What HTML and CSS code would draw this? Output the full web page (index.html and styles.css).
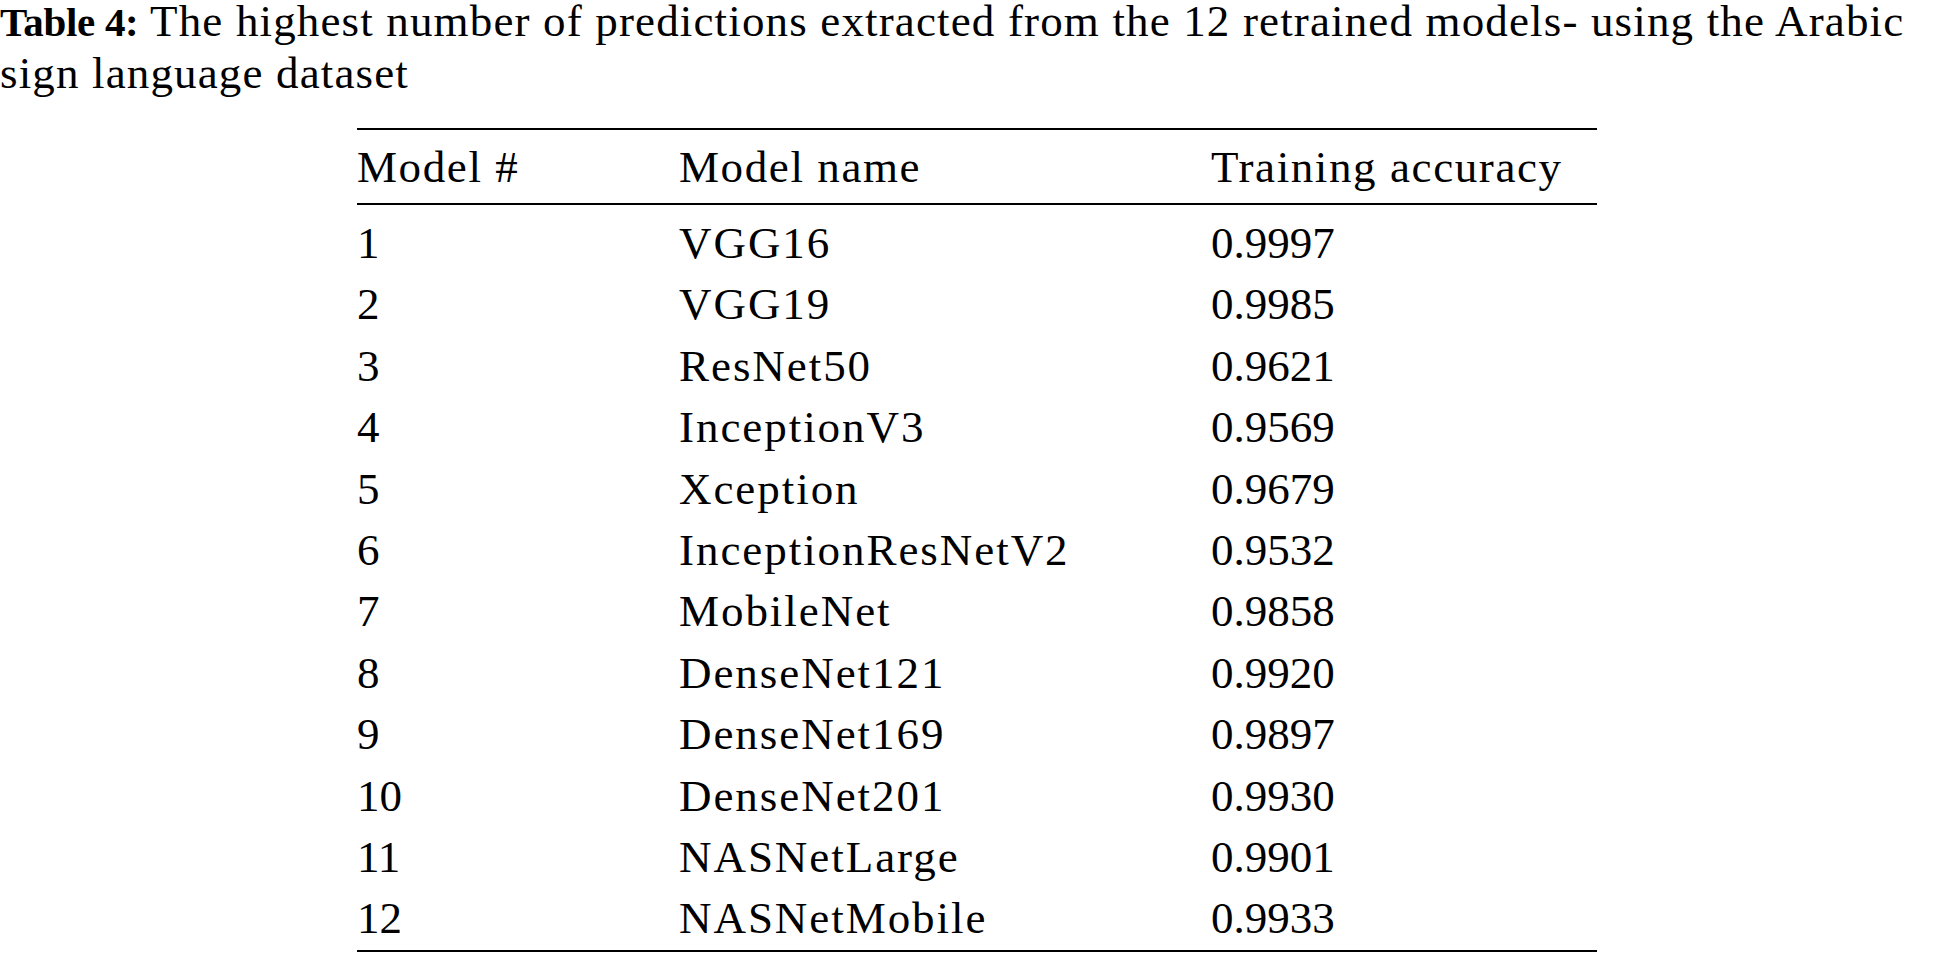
FILE: index.html
```html
<!DOCTYPE html>
<html>
<head>
<meta charset="utf-8">
<link rel="stylesheet" href="styles.css">
</head>
<body>
<div class="caption"><b class="label">Table 4:</b> The highest number of predictions extracted from the 12 retrained models- using the Arabic sign language dataset</div>
<table class="results">
<thead>
<tr><th class="c1">Model #</th><th class="c2">Model name</th><th class="c3">Training accuracy</th></tr>
</thead>
<tbody>
<tr><td>1</td><td class="name">VGG16</td><td>0.9997</td></tr>
<tr><td>2</td><td class="name">VGG19</td><td>0.9985</td></tr>
<tr><td>3</td><td class="name">ResNet50</td><td>0.9621</td></tr>
<tr><td>4</td><td class="name">InceptionV3</td><td>0.9569</td></tr>
<tr><td>5</td><td class="name">Xception</td><td>0.9679</td></tr>
<tr><td>6</td><td class="name">InceptionResNetV2</td><td>0.9532</td></tr>
<tr><td>7</td><td class="name">MobileNet</td><td>0.9858</td></tr>
<tr><td>8</td><td class="name">DenseNet121</td><td>0.9920</td></tr>
<tr><td>9</td><td class="name">DenseNet169</td><td>0.9897</td></tr>
<tr><td>10</td><td class="name">DenseNet201</td><td>0.9930</td></tr>
<tr><td>11</td><td class="name">NASNetLarge</td><td>0.9901</td></tr>
<tr><td>12</td><td class="name">NASNetMobile</td><td>0.9933</td></tr>
</tbody>
</table>
</body>
</html>
```
FILE: styles.css
```css
html, body {
  margin: 0;
  padding: 0;
  background: #ffffff;
}
body {
  font-family: "Liberation Serif", "Times New Roman", serif;
  font-size: 45px;
  color: #000;
}
.caption {
  line-height: 51px;
  margin-top: -3.7px;
  letter-spacing: 1.15px;
}
.caption .label {
  font-weight: bold;
  font-size: 41px;
  letter-spacing: -0.3px;
}
.results {
  border-collapse: collapse;
  width: 1240px;
  margin: 28.7px auto 0;
  border-top: 2px solid #000;
  border-bottom: 2px solid #000;
  table-layout: fixed;
}
.results th {
  font-weight: normal;
  text-align: left;
  line-height: 45.4px;
  padding: 15px 0 12.6px;
  border-bottom: 2px solid #000;
  letter-spacing: 1.6px;
}
.results .c1 { width: 322px; }
.results .c2 { width: 532px; }
.results .c3 { width: 386px; }
.results td {
  line-height: 45.4px;
  padding: 16px 0 0;
  text-align: left;
}
.results td.name {
  letter-spacing: 1.95px;
}
.results tbody tr:last-child td {
  padding-bottom: 8px;
}
```
